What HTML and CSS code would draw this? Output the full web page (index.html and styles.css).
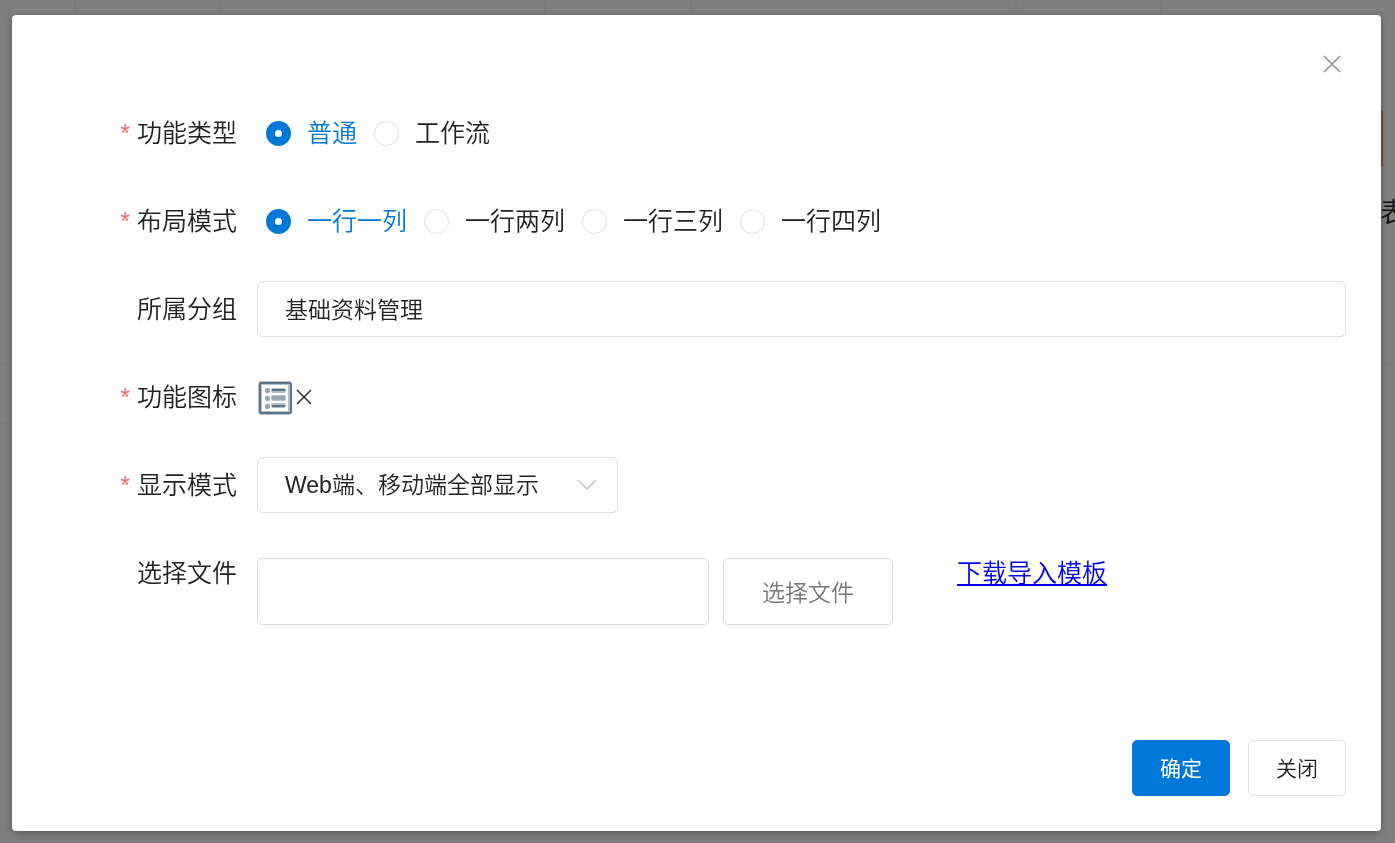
FILE: index.html
```
<!DOCTYPE html>
<html lang="zh-CN">
<head>
  <meta charset="UTF-8">
  <title>功能导入</title>
  <link rel="stylesheet" href="styles.css">
</head>
<body>

  <div class="page">
    <div class="page-row"><i></i><i></i><i></i><i></i><i></i><i></i><i></i></div>
    <div class="page-mark"></div>
    <span class="page-text">表</span>
    <div class="page-line"></div>
    <div class="page-line page-line-short"></div>
    <div class="mask"></div>
  </div>

  <div class="dialog" role="dialog">
    <button type="button" class="dialog-close" aria-label="关闭窗口">
      <svg width="20" height="20" viewBox="0 0 20 20"><path d="M2 2l16 16M18 2L2 18"/></svg>
    </button>

    <form>
      <div class="form-item" role="radiogroup" aria-labelledby="type-label">
        <span class="label required" id="type-label">功能类型</span>
        <div class="content radios">
          <label><input type="radio" name="type" checked><span>普通</span></label>
          <label><input type="radio" name="type"><span>工作流</span></label>
        </div>
      </div>

      <div class="form-item" role="radiogroup" aria-labelledby="layout-label">
        <span class="label required" id="layout-label">布局模式</span>
        <div class="content radios">
          <label><input type="radio" name="layout" checked><span>一行一列</span></label>
          <label><input type="radio" name="layout"><span>一行两列</span></label>
          <label><input type="radio" name="layout"><span>一行三列</span></label>
          <label><input type="radio" name="layout"><span>一行四列</span></label>
        </div>
      </div>

      <div class="form-item">
        <label class="label" for="group">所属分组</label>
        <div class="content">
          <input type="text" class="input" id="group" value="基础资料管理">
        </div>
      </div>

      <div class="form-item">
        <span class="label required">功能图标</span>
        <div class="content icon-picker">
          <svg width="36" height="36" viewBox="0 0 36 36">
            <rect x="3" y="4" width="30" height="30" rx="2" fill="#fff" stroke="#b4c0ca" stroke-width="4"/>
            <rect x="3" y="4" width="31" height="30" rx="1" fill="none" stroke="#5d7386" stroke-width="2"/>
            <g fill="#93a2af">
              <rect x="8" y="9" width="5" height="5" rx="2"/>
              <rect x="8" y="17" width="5" height="5" rx="2"/>
              <rect x="8" y="25" width="5" height="5" rx="2"/>
            </g>
            <g fill="#b4c0ca">
              <rect x="14" y="9" width="15" height="5" rx="2"/>
              <rect x="14" y="16" width="15" height="6" rx="2"/>
              <rect x="14" y="24" width="15" height="5" rx="2"/>
            </g>
            <rect x="15" y="10" width="13" height="2" fill="#5d7386"/>
            <rect x="15" y="17" width="13" height="4" fill="#9ba9b5"/>
            <rect x="15" y="26" width="13" height="2" fill="#5d7386"/>
          </svg>
          <button type="button" class="icon-remove" aria-label="移除图标">
            <svg width="18" height="18" viewBox="0 0 18 18"><path d="M2 2l14 14M16 2L2 16" stroke-width="1.4"/></svg>
          </button>
        </div>
      </div>

      <div class="form-item">
        <label class="label required" for="display">显示模式</label>
        <div class="content">
          <div class="select">
            <select class="input" id="display">
              <option>Web端、移动端全部显示</option>
            </select>
            <svg width="20" height="12" viewBox="0 0 20 12"><path d="M1 1l9 9 9-9" stroke-width="1.6"/></svg>
          </div>
        </div>
      </div>

      <div class="form-item">
        <label class="label" for="file">选择文件</label>
        <div class="content files">
          <input type="text" class="input file-input" id="file">
          <button type="button" class="file-button">选择文件</button>
          <a href="#">下载导入模板</a>
        </div>
      </div>

      <div class="footer">
        <button type="submit" class="btn btn-primary">确定</button>
        <button type="button" class="btn">关闭</button>
      </div>
    </form>
  </div>

</body>
</html>
```

FILE: styles.css
```
* {
  box-sizing: border-box;
}

body {
  margin: 0;
  font-family: "Liberation Sans", "Noto Sans CJK SC", sans-serif;
  font-size: 25px;
  font-weight: 350;
  color: #222;
  background-color: #808080;
}

button, input, select {
  font-family: inherit;
  font-weight: inherit;
  color: inherit;
  margin: 0;
}

svg {
  display: block;
  fill: none;
}

/* page under the dialog */
.page {
  position: fixed;
  inset: 0;
  overflow: hidden;
  background-color: #fff;
}

.page-row {
  display: grid;
  grid-template-columns: 76px 145px 325px 146px 325px 145px 1fr;
  height: 40px;
}

.page-row i {
  border-right: 2px solid #f8f8f8;
}

.page-mark {
  position: absolute;
  top: 110px;
  right: 12px;
  width: 60px;
  height: 56px;
  background-color: #ff9a80;
}

.page-text {
  position: absolute;
  top: 193px;
  right: -12px;
  font-size: 27px;
  line-height: 40px;
}

.page-line {
  position: absolute;
  top: 363px;
  width: 100%;
  height: 2px;
  background-color: #f8f8f8;
}

.page-line-short {
  top: 422px;
  width: 50%;
}

.mask {
  position: absolute;
  inset: 0;
  background-color: rgba(0, 0, 0, 0.5);
}

.dialog {
  position: relative;
  margin: 15px 14px 12px 12px;
  padding: 90px 35px 35px;
  background-color: #fff;
  border-radius: 4px;
  box-shadow: 0 2px 8px rgba(0, 0, 0, 0.3);
}

.dialog-close, .icon-remove {
  padding: 0;
  border: none;
  background: none;
  cursor: pointer;
}

.dialog-close {
  position: absolute;
  top: 39px;
  right: 39px;
  stroke: #909399;
  stroke-width: 1.7;
}

form {
  display: flex;
  flex-direction: column;
  gap: 32px;
}

.form-item {
  display: flex;
  gap: 20px;
}

.label {
  flex: 0 0 190px;
  line-height: 56px;
  text-align: right;
}

.required::before {
  content: "*";
  margin-right: 7px;
  color: #f56c6c;
}

.content {
  flex: 1;
  display: flex;
  align-items: center;
  min-height: 56px;
}

.radios {
  gap: 17px;
  padding-left: 9px;
}

.radios label {
  display: flex;
  align-items: center;
  gap: 16px;
  line-height: 32px;
  cursor: pointer;
}

.radios input {
  appearance: none;
  width: 25px;
  height: 25px;
  border: 1px solid #dcdfe6;
  border-radius: 50%;
  background-color: #fff;
}

.radios input:checked {
  border: 9px solid #0078d9;
}

.radios input:checked + span {
  color: #0078d9;
}

.input {
  width: 100%;
  height: 56px;
  padding: 0 27px 2px;
  border: 1px solid #dcdfe6;
  border-radius: 6px;
  background-color: #fff;
  font-size: 23px;
}

.icon-picker {
  gap: 2px;
}

.icon-remove {
  stroke: #222;
}

.select {
  position: relative;
  width: 361px;
}

.select select {
  appearance: none;
  padding-bottom: 0;
}

.select svg {
  position: absolute;
  top: 22px;
  right: 21px;
  stroke: #c0c4cc;
  pointer-events: none;
}

.files {
  align-items: flex-start;
}

.file-input, .file-button {
  height: 67px;
  margin-top: 13px;
  border: 1px solid #dcdcdc;
  border-radius: 5px;
}

.file-input {
  width: 452px;
}

.file-button {
  width: 170px;
  margin-left: 14px;
  padding-bottom: 3px;
  background-color: #fff;
  font-size: 23px;
  color: #777;
}

.files a {
  margin-left: 64px;
  line-height: 56px;
  color: #00e;
}

.footer {
  display: flex;
  justify-content: flex-end;
  gap: 18px;
  margin-top: 83px;
}

.btn {
  width: 98px;
  height: 56px;
  padding: 0 0 2px;
  border: 1px solid #dcdfe6;
  border-radius: 5px;
  background-color: #fff;
  font-size: 21px;
  cursor: pointer;
}

.btn-primary {
  border-color: #0078d9;
  background-color: #0078d9;
  color: #fff;
  font-weight: 400;
}
```
